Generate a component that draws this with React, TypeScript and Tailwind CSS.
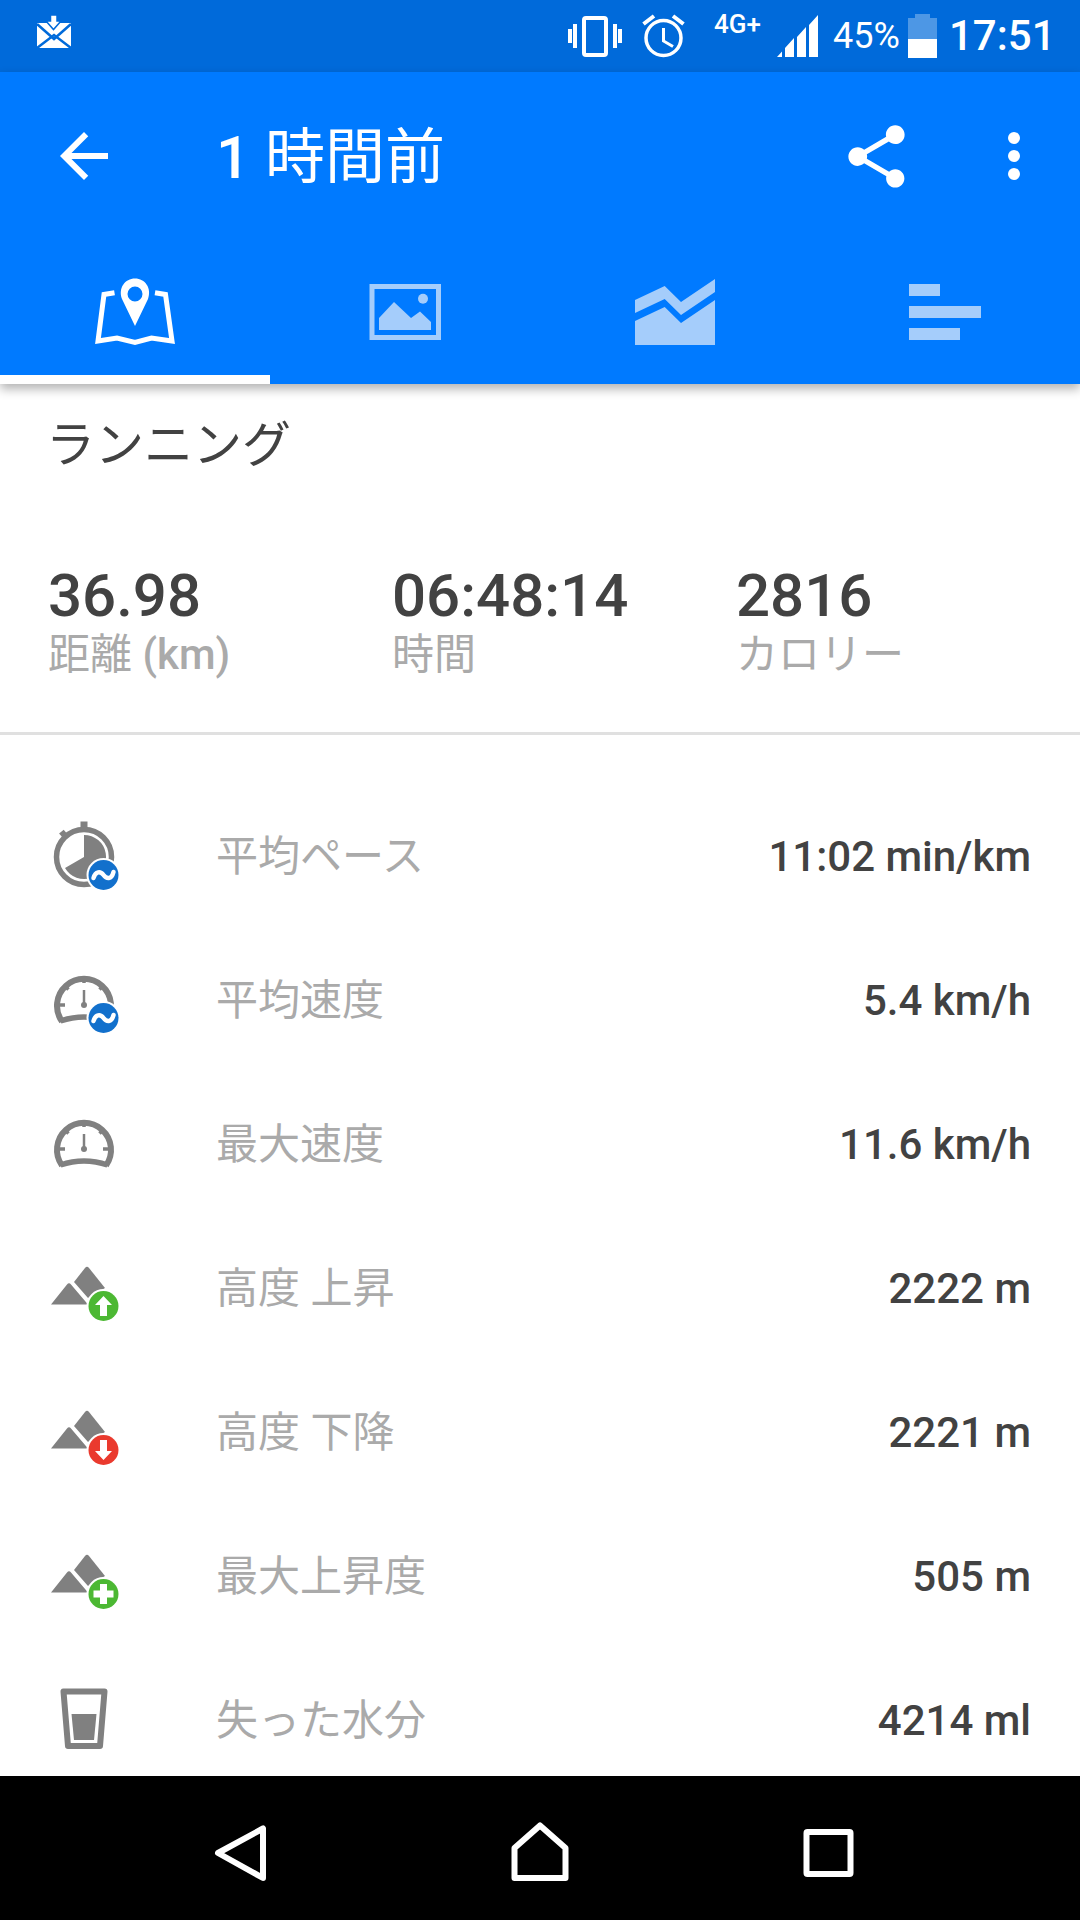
const jp = "font-['Roboto','Noto_Sans_CJK_JP',sans-serif]";

function Badge({ cx, cy, color, kind }: { cx: number; cy: number; color: string; kind: 'wave' | 'up' | 'down' | 'plus' }) {
  return (
    <g>
      <circle cx={cx} cy={cy} r={17} fill="#fff" />
      <circle cx={cx} cy={cy} r={15} fill={color} />
      {kind === 'wave' && (
        <path d={`M${cx - 10} ${cy + 3}C${cx - 8} ${cy - 4} ${cx - 3} ${cy - 4} ${cx} ${cy}S${cx + 8} ${cy + 5} ${cx + 10} ${cy - 3}`} fill="none" stroke="#fff" strokeWidth={4.500} strokeLinecap="round" />
      )}
      {kind === 'up' && (
        <path d={`M${cx} ${cy - 10}l8.500 9h-5v11h-7v-11h-5z`} fill="#fff" />
      )}
      {kind === 'down' && (
        <path d={`M${cx} ${cy + 10}l-8.500-9h5v-11h7v11h5z`} fill="#fff" />
      )}
      {kind === 'plus' && (
        <path d={`M${cx - 3.500} ${cy - 10}h7v6.500h6.500v7h-6.500v6.500h-7v-6.500h-6.500v-7h6.500z`} fill="#fff" />
      )}
    </g>
  );
}

function Stopwatch() {
  return (
    <svg width="72" height="72" viewBox="48 820 72 72" className="overflow-visible">
      <circle cx="84" cy="857" r="27.500" fill="none" stroke="#808080" strokeWidth="5.500" />
      <rect x="80.500" y="821.500" width="7" height="7" fill="#808080" />
      <rect x="60" y="831" width="6" height="5" fill="#808080" transform="rotate(-40 63 833.500)" />
      <path d="M84 857V835A22 22 0 1 1 65 868Z" fill="#808080" />
      <Badge cx={103.500} cy={875} color="#1270cc" kind="wave" />
    </svg>
  );
}

function Gauge({ badge }: { badge?: boolean }) {
  return (
    <svg width="72" height="72" viewBox="48 964 72 72" className="overflow-visible">
      <path d="M62 1021.500A27 27 0 1 1 106 1021.500" fill="none" stroke="#808080" strokeWidth="6" />
      <path d="M60.500 1021Q84 1013 107.500 1021" fill="none" stroke="#808080" strokeWidth="5.500" />
      <path d="M84 977V983M64 985l4.500 4.500M104 985l-4.500 4.500M58 1005h7M110 1005h-7" stroke="#808080" strokeWidth="3.500" fill="none" />
      <path d="M84 990V1005" stroke="#808080" strokeWidth="2.500" />
      <circle cx="84" cy="1005" r="3" fill="#808080" />
      {badge && <Badge cx={103.500} cy={1018} color="#1270cc" kind="wave" />}
    </svg>
  );
}

function Mountain({ kind }: { kind: 'up' | 'down' | 'plus' }) {
  return (
    <svg width="72" height="72" viewBox="48 1252 72 72" className="overflow-visible">
      <path d="M51 1304.500L67 1284.500Q69 1282 71 1284.500L88 1304.500Z" fill="#808080" />
      <path d="M74 1282L85 1268Q87 1265.500 89 1268L105 1288L88 1298Z" fill="#808080" />
      <Badge cx={103.500} cy={1306} color={kind === 'down' ? '#ea3a2e' : '#4cb833'} kind={kind} />
    </svg>
  );
}

function Glass() {
  return (
    <svg width="72" height="72" viewBox="48 1684 72 72" className="overflow-visible">
      <path d="M63.500 1691.500H104.500L100 1746H68Z" fill="none" stroke="#808080" strokeWidth="6" strokeLinejoin="round" />
      <path d="M71.500 1714H96.500L94 1740H74Z" fill="#808080" />
    </svg>
  );
}

const rows = [
  { icon: <Stopwatch />, label: '平均ペース', value: '11:02 min/km' },
  { icon: <Gauge badge />, label: '平均速度', value: '5.4 km/h' },
  { icon: <Gauge />, label: '最大速度', value: '11.6 km/h' },
  { icon: <Mountain kind="up" />, label: '高度 上昇', value: '2222 m' },
  { icon: <Mountain kind="down" />, label: '高度 下降', value: '2221 m' },
  { icon: <Mountain kind="plus" />, label: '最大上昇度', value: '505 m' },
  { icon: <Glass />, label: '失った水分', value: '4214 ml' },
];

const stats = [
  { v: '36.98', l: '距離', u: ' (km)' },
  { v: '06:48:14', l: '時間', u: '' },
  { v: '2816', l: 'カロリー', u: '' },
];

export default function App() {
  return (
    <div className={`w-[1080px] h-[1920px] flex flex-col overflow-hidden bg-white ${jp}`}>
      {/* status bar */}
      <div className="h-[72px] shrink-0 bg-[#006ada] flex items-center text-white relative">
        <svg width="72" height="72" viewBox="18 0 72 72" className="ml-[18px]">
          <path d="M37 23H71V48H37Z" fill="#fff" />
          <path d="M37 24L54 39L71 24M37 48L54 35L71 48" stroke="#006ada" strokeWidth="2.500" fill="none" />
          <path d="M50.500 15H57V21H61L53.500 29.500L46 21H50.500Z" fill="#fff" stroke="#006ada" strokeWidth="1.500" />
        </svg>
        <div className="ml-auto flex items-center">
          <svg width="56" height="44" viewBox="567 14 56 44" fill="#fff">
            <rect x="584" y="18" width="22" height="37" rx="2" fill="none" stroke="#fff" strokeWidth="4" />
            <path d="M568 29h4v14h-4zM573 24h4v24h-4zM613 24h4v24h-4zM618 29h4v14h-4z" />
          </svg>
          <svg width="46" height="44" viewBox="641 14 46 44" fill="none" stroke="#fff" className="ml-[18px]">
            <circle cx="663.500" cy="38" r="17.500" strokeWidth="3.500" />
            <path d="M663.500 28V41L673 46.500" strokeWidth="3" />
            <path d="M643.500 24L654 16M683.500 24L673 16" strokeWidth="4" />
          </svg>
          <span className="text-[26px] leading-[26px] font-medium w-[48px] ml-[27px] mb-[24px] whitespace-nowrap">4G+</span>
          <svg width="42" height="42" viewBox="777 16 42 42" className="ml-[15px]" fill="#fff">
            <path d="M777 58L782 52.500V58ZM785 58V49L794 39V58ZM797 58V38L806 28V58ZM809 58V26L818 16V58Z" />
          </svg>
          <span className="text-[36px] leading-[40px] ml-[14px] w-[68px]">45%</span>
          <svg width="30" height="44" viewBox="908 13 30 44" className="ml-[7px]">
            <path d="M915 13H930V17H937V38H908V17H915Z" fill="#ffffff" fillOpacity="0.3" />
            <rect x="908" y="38" width="29" height="19" fill="#fff" />
          </svg>
          <span className="text-[42px] leading-[44px] ml-[11px] w-[105px] mr-[26px] font-medium whitespace-nowrap">17:51</span>
        </div>
      </div>

      {/* toolbar + tabs */}
      <div className="h-[312px] shrink-0 bg-[#007aff] relative z-10 shadow-[0_5px_10px_rgba(0,0,0,0.3)] flex flex-col">
        <div className="h-[168px] flex items-center text-white">
          <svg width="72" height="72" viewBox="0 0 24 24" fill="#fff" className="ml-[48px]">
            <path d="M20 11H7.830l5.590-5.590L12 4l-8 8 8 8 1.410-1.410L7.830 13H20v-2z" />
          </svg>
          <span className="text-[60px] leading-[72px] ml-[96px] pt-[4px]"><span className="font-medium">1</span> 時間前</span>
          <svg width="75" height="75" viewBox="0 0 24 24" fill="#fff" className="ml-auto">
            <path d="M18 16.080c-.760 0-1.440.300-1.960.770L8.910 12.700c.050-.230.090-.460.090-.700s-.040-.470-.090-.700l7.050-4.110c.540.500 1.250.810 2.040.810 1.660 0 3-1.340 3-3s-1.340-3-3-3-3 1.340-3 3c0 .240.040.470.090.700L8.040 9.810C7.500 9.310 6.790 9 6 9c-1.660 0-3 1.340-3 3s1.340 3 3 3c.790 0 1.500-.310 2.040-.810l7.120 4.160c-.050.210-.080.430-.080.650 0 1.610 1.310 2.920 2.920 2.920 1.610 0 2.920-1.310 2.920-2.920s-1.310-2.920-2.920-2.920z" />
          </svg>
          <svg width="72" height="72" viewBox="0 0 72 72" fill="#fff" className="ml-[64px] mr-[30px]">
            <circle cx="36" cy="18" r="6" /><circle cx="36" cy="36" r="6" /><circle cx="36" cy="54" r="6" />
          </svg>
        </div>
        <div className="flex-1 grid grid-cols-4">
          <div className="flex items-center justify-center border-b-[9px] border-white">
            <svg width="96" height="96" viewBox="87 264 96 96" className="mt-[9px]">
              <path d="M114.500 292.800L104 294.500L98 341L117 338L135 342.500L151.500 338L172 341L165.500 294.500L155 292.800" fill="none" stroke="#fff" strokeWidth="5" />
              <path fillRule="evenodd" d="M135 326L122 299C118 288 125 278.500 135 278.500C145 278.500 152 288 148 299ZM135 286.500A7.500 7.500 0 1 0 135 301.500A7.500 7.500 0 1 0 135 286.500Z" fill="#fff" />
            </svg>
          </div>
          <div className="flex items-center justify-center">
            <svg width="96" height="96" viewBox="357 264 96 96">
              <rect x="372" y="286.500" width="66.500" height="51" fill="none" stroke="#a5cdfb" strokeWidth="5" />
              <path d="M379 330V318L394 302L411 318L420 311.500L431 322V330Z" fill="#a5cdfb" />
              <circle cx="423" cy="298.700" r="5" fill="#a5cdfb" />
            </svg>
          </div>
          <div className="flex items-center justify-center">
            <svg width="96" height="96" viewBox="627 264 96 96" fill="#a5cdfb">
              <path d="M635 300L664.700 286L681 302L715 279V292L681 315L664.700 299L635 313Z" />
              <path d="M635 321L664.700 307L681 323L715 300V345H635Z" />
            </svg>
          </div>
          <div className="flex flex-col justify-center gap-[10px] pl-[98.500px]">
            <div className="h-[12px] w-[31px] bg-[#a5cdfb]" />
            <div className="h-[12px] w-[72px] bg-[#a5cdfb]" />
            <div className="h-[12px] w-[51px] bg-[#a5cdfb]" />
          </div>
        </div>
      </div>

      {/* content */}
      <div className="flex-1 min-h-0 overflow-hidden">
        <h1 className="pl-[46px] mt-[30px] text-[49px] leading-[64px] font-normal text-[#424242]">ランニング</h1>
        <div className="h-[257px] border-b-[3px] border-[#e0e0e0] grid grid-cols-[344px_344px_1fr] pl-[48px] pt-[83px]">
          {stats.map((s) => (
            <div key={s.v}>
              <div className="text-[60px] leading-[70px] font-medium text-[#424242]">{s.v}</div>
              <div className="text-[42px] leading-[48px] text-[#aaaaaa]">{s.l}<span className="font-medium">{s.u}</span></div>
            </div>
          ))}
        </div>
        <div className="pt-[49px]">
          {rows.map((r) => (
            <div key={r.label} className="h-[144px] flex items-center pr-[49px]">
              <div className="w-[72px] h-[72px] ml-[48px]">{r.icon}</div>
              <span className="ml-[96px] text-[42px] text-[#aaaaaa]">{r.label}</span>
              <span className="ml-auto text-[42px] font-medium text-[#424242]">{r.value}</span>
            </div>
          ))}
        </div>
      </div>

      {/* nav bar */}
      <div className="h-[144px] shrink-0 bg-black flex items-center relative">
        <svg width="1080" height="144" viewBox="0 1776 1080 144" fill="none" stroke="#fff" strokeWidth="6" strokeLinejoin="round">
          <path d="M218 1853L263 1828.500V1878Z" />
          <path d="M514.500 1878V1848L540 1825.500L565.500 1848V1878Z" />
          <rect x="806.500" y="1832" width="44" height="42" rx="1" />
        </svg>
      </div>
    </div>
  );
}
